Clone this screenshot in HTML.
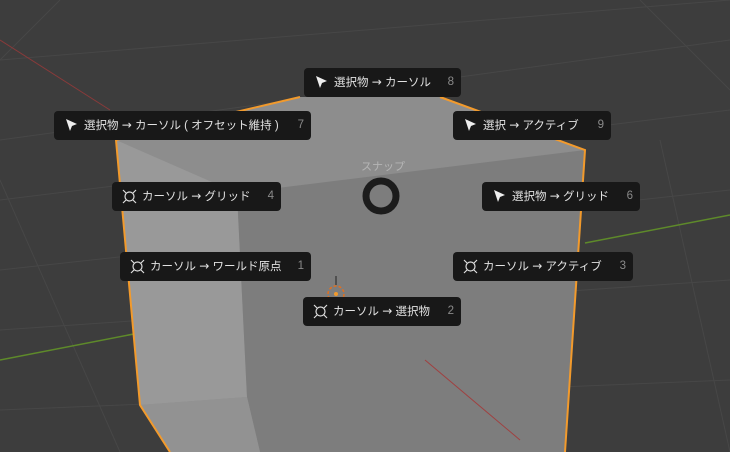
<!DOCTYPE html>
<html><head><meta charset="utf-8"><style>
body{margin:0;width:730px;height:452px;overflow:hidden;background:#3d3d3d;font-family:"Liberation Sans","Noto Sans CJK JP",sans-serif}
.b{position:absolute;height:29px;background:#181818;border-radius:4px;color:#e2e2e2;font-size:11.5px;line-height:29px;box-sizing:border-box;padding-left:30px}
.b .n{position:absolute;right:7px;top:0;color:#8a8a8a}
.b svg{position:absolute;left:10px;top:7px}
i{font-style:normal;font-family:"DejaVu Sans",sans-serif;font-size:12px}
</style></head><body>
<svg width="730" height="452" style="position:absolute;left:0;top:0">
<g stroke="#474747" stroke-width="1" fill="none">
<line x1="0" y1="60" x2="730" y2="0"/><line x1="0" y1="140" x2="730" y2="40"/>
<line x1="0" y1="200" x2="730" y2="110"/><line x1="0" y1="270" x2="730" y2="190"/>
<line x1="0" y1="330" x2="730" y2="280"/><line x1="0" y1="410" x2="730" y2="380"/>
<line x1="60" y1="0" x2="0" y2="60"/><line x1="0" y1="180" x2="120" y2="452"/>
<line x1="640" y1="0" x2="730" y2="90"/><line x1="660" y1="140" x2="730" y2="452"/>
</g>
<line x1="0" y1="40" x2="110" y2="110" stroke="#8a3a3a"/>
<line x1="0" y1="360" x2="180" y2="325" stroke="#5e8a2a" stroke-width="1.5"/>
<line x1="585" y1="243" x2="730" y2="215" stroke="#5e8a2a" stroke-width="1.5"/>
<polygon points="116,140 140,405 170,452 565,452 585,150 440,97 300,97" fill="#8d8d8d"/>
<polygon points="116,140 237,193 247,397 140,405" fill="#999"/>
<polygon points="237,193 585,150 565,452 260,452 247,397" fill="#7d7d7d"/>
<polygon points="140,405 247,397 260,452 170,452" fill="#929292"/>
<line x1="425" y1="360" x2="520" y2="440" stroke="#a04040"/>
<polyline points="300,97 116,140 140,405 170,452" fill="none" stroke="#f29a2c" stroke-width="2"/>
<polyline points="440,97 585,150 565,452" fill="none" stroke="#f29a2c" stroke-width="2"/>
<circle cx="381" cy="196" r="15" fill="none" stroke="#1c1c1c" stroke-width="7"/>
<text x="383" y="170" fill="#b5b5b5" font-size="11" text-anchor="middle" font-family="Liberation Sans,Noto Sans CJK JP,sans-serif">スナップ</text>
<circle cx="336" cy="294" r="8" fill="none" stroke="#e07020" stroke-dasharray="3,2" stroke-width="1.5"/>
<line x1="336" y1="276" x2="336" y2="285" stroke="#222"/><circle cx="336" cy="294" r="2" fill="#f29a2c"/>
</svg>
<svg width="0" height="0" style="position:absolute"><defs>
<g id="a"><path d="M2 1 L13 6 L8 8 L6 13 Z" fill="#eee"/></g>
<g id="c" fill="none" stroke="#ddd" stroke-width="1.2"><circle cx="7.5" cy="7.5" r="4.5"/><path d="M1 1 L4 4 M14 1 L11 4 M1 14 L4 11 M14 14 L11 11"/></g>
</defs></svg>
<div class="b" style="left:304px;top:68px;width:157px"><svg width="15" height="15"><use href="#a"/></svg>選択物 <i>→</i> カーソル<span class="n">8</span></div>
<div class="b" style="left:54px;top:111px;width:257px"><svg width="15" height="15"><use href="#a"/></svg>選択物 <i>→</i> カーソル ( オフセット維持 )<span class="n">7</span></div>
<div class="b" style="left:453px;top:111px;width:158px"><svg width="15" height="15"><use href="#a"/></svg>選択 <i>→</i> アクティブ<span class="n">9</span></div>
<div class="b" style="left:112px;top:182px;width:169px"><svg width="15" height="15"><use href="#c"/></svg>カーソル <i>→</i> グリッド<span class="n">4</span></div>
<div class="b" style="left:482px;top:182px;width:158px"><svg width="15" height="15"><use href="#a"/></svg>選択物 <i>→</i> グリッド<span class="n">6</span></div>
<div class="b" style="left:120px;top:252px;width:191px"><svg width="15" height="15"><use href="#c"/></svg>カーソル <i>→</i> ワールド原点<span class="n">1</span></div>
<div class="b" style="left:453px;top:252px;width:180px"><svg width="15" height="15"><use href="#c"/></svg>カーソル <i>→</i> アクティブ<span class="n">3</span></div>
<div class="b" style="left:303px;top:297px;width:158px"><svg width="15" height="15"><use href="#c"/></svg>カーソル <i>→</i> 選択物<span class="n">2</span></div>
</body></html>
